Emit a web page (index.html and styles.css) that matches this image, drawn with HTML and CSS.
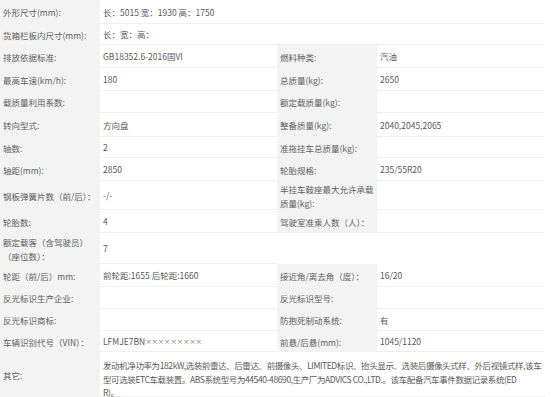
FILE: index.html
```html
<!DOCTYPE html>
<html lang="zh">
<head>
<meta charset="utf-8">
<title>车辆参数</title>
<link rel="stylesheet" href="styles.css">
</head>
<body>
<div class="spec">
  <div class="lab">外形尺寸(mm):</div>
  <div class="val span3">长：5015 宽：1930 高：1750</div>

  <div class="lab">货箱栏板内尺寸(mm):</div>
  <div class="val span3">长：宽：高：</div>

  <div class="lab">排放依据标准:</div>
  <div class="val">GB18352.6-2016国VI</div>
  <div class="lab">燃料种类:</div>
  <div class="val">汽油</div>

  <div class="lab">最高车速(km/h):</div>
  <div class="val">180</div>
  <div class="lab">总质量(kg):</div>
  <div class="val">2650</div>

  <div class="lab">载质量利用系数:</div>
  <div class="val"></div>
  <div class="lab">额定载质量(kg):</div>
  <div class="val"></div>

  <div class="lab">转向型式:</div>
  <div class="val">方向盘</div>
  <div class="lab">整备质量(kg):</div>
  <div class="val">2040,2045,2065</div>

  <div class="lab">轴数:</div>
  <div class="val">2</div>
  <div class="lab">准拖挂车总质量(kg):</div>
  <div class="val"></div>

  <div class="lab">轴距(mm):</div>
  <div class="val">2850</div>
  <div class="lab">轮胎规格:</div>
  <div class="val">235/55R20</div>

  <div class="lab">钢板弹簧片数（前/后）：</div>
  <div class="val">-/-</div>
  <div class="lab">半挂车鞍座最大允许承载<br>质量(kg):</div>
  <div class="val"></div>

  <div class="lab">轮胎数:</div>
  <div class="val">4</div>
  <div class="lab">驾驶室准乘人数（人）：</div>
  <div class="val"></div>

  <div class="lab">额定载客（含驾驶员）<br>（座位数）：</div>
  <div class="val">7</div>
  <div class="blank span2"></div>

  <div class="lab">轮距（前/后）mm:</div>
  <div class="val">前轮距:1655 后轮距:1660</div>
  <div class="lab">接近角/离去角（度）：</div>
  <div class="val">16/20</div>

  <div class="lab">反光标识生产企业:</div>
  <div class="val"></div>
  <div class="lab">反光标识型号:</div>
  <div class="val"></div>

  <div class="lab">反光标识商标:</div>
  <div class="val"></div>
  <div class="lab">防抱死制动系统:</div>
  <div class="val">有</div>

  <div class="lab">车辆识别代号（VIN）：</div>
  <div class="val">LFMJE7BN<span class="mask">×××××××××</span></div>
  <div class="lab">前悬/后悬(mm):</div>
  <div class="val">1045/1120</div>

  <div class="lab">其它:</div>
  <div class="val span3 multi">发动机净功率为182kW,选装前雷达、后雷达、前摄像头、LIMITED标识、抬头显示、选装后摄像头式样、外后视镜式样,该车<br>型可选装ETC车载装置。ABS系统型号为44540-48690,生产厂为ADVICS CO.,LTD.。该车配备汽车事件数据记录系统(ED<br>R)。</div>
</div>
</body>
</html>
```

FILE: styles.css
```css
html, body {
  margin: 0;
  padding: 0;
  background: #ffffff;
}

body {
  width: 553px;
  height: 397px;
  overflow: hidden;
  font-family: "Noto Sans CJK SC", "Noto Sans", sans-serif;
  font-size: 8.5px;
  color: #5a5a5a;
}

.spec {
  display: grid;
  width: 545px;
  grid-template-columns: 100px 177px 100px 168px;
  grid-template-rows: 24px 21px 23px 23px 22px 24px 21px 23px 29px 23px 31px 23px 22px 22px 21px 45px;
}

.lab,
.val,
.blank {
  display: flex;
  align-items: center;
  padding: 0 3px;
  line-height: 14px;
  white-space: nowrap;
  overflow: hidden;
}

.lab {
  background: #f3f3f3;
  color: #606060;
}

.val {
  background: #ffffff;
  border-bottom: 1px solid #efefef;
}

.blank {
  background: #ffffff;
}

.span3 {
  grid-column: span 3;
}

.span2 {
  grid-column: span 2;
}

.multi {
  display: block;
  padding-top: 7px;
  line-height: 13.5px;
  letter-spacing: -0.4px;
  overflow: visible;
}

.mask {
  font-size: 6.5px;
  letter-spacing: -0.2px;
  color: #777;
}
```
